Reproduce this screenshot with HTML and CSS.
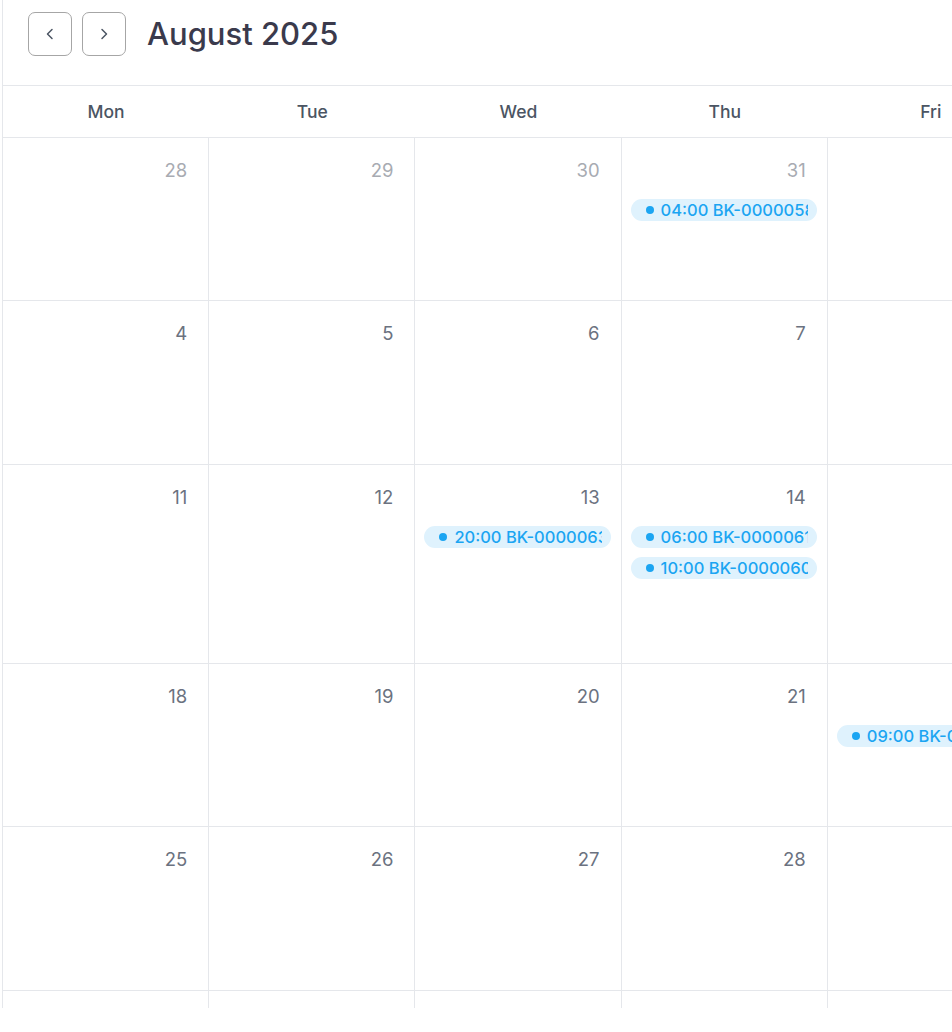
FILE: index.html
```html
<!DOCTYPE html>
<html lang="en">
<head>
<meta charset="utf-8">
<title>August 2025</title>
<link rel="stylesheet" href="styles.css">
</head>
<body>
<div class="calendar">
  <header class="toolbar">
    <button class="nav-btn" aria-label="Previous month">
      <svg viewBox="0 0 16 16" width="16" height="16"><path d="M10 3.5 5.5 8 10 12.5" fill="none" stroke="currentColor" stroke-width="1.5" stroke-linecap="round" stroke-linejoin="round"/></svg>
    </button>
    <button class="nav-btn" aria-label="Next month">
      <svg viewBox="0 0 16 16" width="16" height="16"><path d="M6 3.5 10.5 8 6 12.5" fill="none" stroke="currentColor" stroke-width="1.5" stroke-linecap="round" stroke-linejoin="round"/></svg>
    </button>
    <h1 class="title">August 2025</h1>
  </header>
  <div class="weekdays">
    <div class="wd">Mon</div><div class="wd">Tue</div><div class="wd">Wed</div><div class="wd">Thu</div><div class="wd">Fri</div>
  </div>
  <div class="grid">
    <div class="cell other"><span class="num">28</span></div>
    <div class="cell other"><span class="num">29</span></div>
    <div class="cell other"><span class="num">30</span></div>
    <div class="cell other"><span class="num">31</span><div class="events"><div class="event"><span class="dot"></span><span class="ev-text">04:00 BK-0000058</span></div></div></div>
    <div class="cell"><span class="num">1</span></div>

    <div class="cell"><span class="num">4</span></div>
    <div class="cell"><span class="num">5</span></div>
    <div class="cell"><span class="num">6</span></div>
    <div class="cell"><span class="num">7</span></div>
    <div class="cell"><span class="num">8</span></div>

    <div class="cell"><span class="num">11</span></div>
    <div class="cell"><span class="num">12</span></div>
    <div class="cell"><span class="num">13</span><div class="events"><div class="event"><span class="dot"></span><span class="ev-text">20:00 BK-0000063</span></div></div></div>
    <div class="cell"><span class="num">14</span><div class="events"><div class="event"><span class="dot"></span><span class="ev-text">06:00 BK-0000061</span></div><div class="event"><span class="dot"></span><span class="ev-text">10:00 BK-0000060</span></div></div></div>
    <div class="cell"><span class="num">15</span></div>

    <div class="cell"><span class="num">18</span></div>
    <div class="cell"><span class="num">19</span></div>
    <div class="cell"><span class="num">20</span></div>
    <div class="cell"><span class="num">21</span></div>
    <div class="cell"><span class="num">22</span><div class="events"><div class="event"><span class="dot"></span><span class="ev-text">09:00 BK-0000062</span></div></div></div>

    <div class="cell"><span class="num">25</span></div>
    <div class="cell"><span class="num">26</span></div>
    <div class="cell"><span class="num">27</span></div>
    <div class="cell"><span class="num">28</span></div>
    <div class="cell"><span class="num">29</span></div>

    <div class="cell other"><span class="num">1</span></div>
    <div class="cell other"><span class="num">2</span></div>
    <div class="cell other"><span class="num">3</span></div>
    <div class="cell other"><span class="num">4</span></div>
    <div class="cell other"><span class="num">5</span></div>
  </div>
</div>
</body>
</html>
```
FILE: styles.css
```css
html, body {
  margin: 0;
  padding: 0;
  background: #ffffff;
  overflow: hidden;
}
body {
  font-family: Inter, "Noto Sans", "Liberation Sans", sans-serif;
  color: #374151;
}
.calendar {
  margin-left: 2px;
  width: 1031px;
  height: 1008px;
  overflow: hidden;
  border-left: 1px solid #e5e7eb;
  display: flex;
  flex-direction: column;
}
.toolbar {
  flex: none;
  height: 86px;
  box-sizing: border-box;
  border-bottom: 1px solid #e5e7eb;
  display: flex;
  align-items: flex-start;
  padding: 12px 0 0 25px;
}
.nav-btn {
  width: 44px;
  height: 44px;
  border: 1px solid #a6a6a6;
  border-radius: 7px;
  background: #ffffff;
  color: #4b5563;
  display: flex;
  align-items: center;
  justify-content: center;
  padding: 0;
  margin-right: 10px;
}
.nav-btn + .nav-btn {
  margin-right: 21px;
}
.title {
  margin: 0;
  font-size: 31px;
  font-weight: 500;
  line-height: 44px;
  color: #3a3a4c;
}
.weekdays {
  flex: none;
  display: grid;
  grid-template-columns: repeat(5, 1fr);
  height: 52px;
  box-sizing: border-box;
  border-bottom: 1px solid #e5e7eb;
}
.wd {
  display: flex;
  align-items: center;
  justify-content: center;
  font-size: 17.5px;
  font-weight: 500;
  color: #4b5563;
}
.grid {
  flex: none;
  display: grid;
  grid-template-columns: repeat(5, 1fr);
  grid-template-rows: 163px 164px 199px 163px 164px 164px;
}
.cell {
  border-right: 1px solid #e5e7eb;
  border-bottom: 1px solid #e5e7eb;
  box-sizing: border-box;
  padding-top: 20px;
  display: flex;
  flex-direction: column;
  min-width: 0;
}
.num {
  align-self: flex-end;
  margin-right: 21px;
  font-size: 18.5px;
  line-height: 24px;
  color: #6b7280;
}
.other .num {
  color: #a8abb2;
}
.events {
  margin-top: 17px;
  display: flex;
  flex-direction: column;
  gap: 9px;
  padding: 0 10px 0 9px;
}
.event {
  height: 22px;
  border-radius: 11px;
  background: #dff2fd;
  color: #1ba5f2;
  display: flex;
  align-items: center;
  padding: 0 9px 0 15px;
  overflow: hidden;
  white-space: nowrap;
  font-size: 16.5px;
  font-weight: 500;
}
.dot {
  flex: none;
  width: 8px;
  height: 8px;
  border-radius: 50%;
  background: #1ba5f2;
  margin-right: 7px;
}
.ev-text {
  overflow: hidden;
  min-width: 0;
}
```
